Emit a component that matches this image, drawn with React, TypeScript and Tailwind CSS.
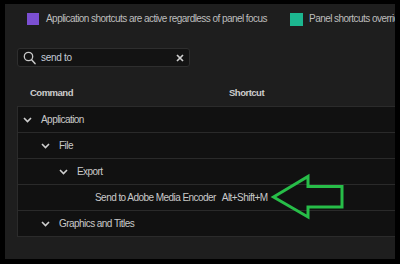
import React from 'react';

const font = { fontFamily: '"Liberation Sans", Arial, sans-serif' };

const Chevron = () => (
    <svg width="9" height="6" viewBox="0 0 9 6" className="shrink-0">
        <path d="M1 1 L4.5 4.5 L8 1" fill="none" stroke="#cfcfcf" strokeWidth="1.6" />
    </svg>
);

interface RowProps {
    level: number;
    label: string;
    open?: boolean;
    shortcut?: string;
}

const rows: RowProps[] = [
    { level: 0, label: 'Application', open: true },
    { level: 1, label: 'File', open: true },
    { level: 2, label: 'Export', open: true },
    { level: 3, label: 'Send to Adobe Media Encoder', shortcut: 'Alt+Shift+M' },
    { level: 1, label: 'Graphics and Titles', open: true },
];

const indents = ['pl-[5px]', 'pl-[23px]', 'pl-[41px]', 'pl-[59px]'];

const Row: React.FC<RowProps & { first: boolean }> = ({ level, label, open, shortcut, first }) => (
    <div
        className={`flex items-center ${first ? 'h-[25px]' : 'h-[26px] border-t border-[#2a2a2a]'} ${indents[level]}`}
    >
        <div className="w-[9px] flex justify-center">{open && <Chevron />}</div>
        <span className="ml-[9px] text-[10px] tracking-[-0.55px] text-[#c9c9c9] whitespace-nowrap">
            {label}
        </span>
        {shortcut && (
            <span className="ml-[6px] text-[10px] tracking-[-0.55px] text-[#c9c9c9] whitespace-nowrap">
                {shortcut}
            </span>
        )}
    </div>
);

export default function App() {
    return (
        <div className="relative w-[400px] h-[264px] bg-black pl-[5px] pt-[4px] pr-[5px] pb-[5px]" style={font}>
            <div className="w-full h-full bg-[#1e1e1e] overflow-hidden flex flex-col">
                {/* legend */}
                <div className="flex items-center h-[12px] mt-[9px] pl-[22px] whitespace-nowrap shrink-0">
                    <div className="w-[12px] h-[12px] bg-[#7b4fd2] shrink-0" />
                    <span className="ml-[7px] text-[10px] leading-[12px] tracking-[-0.55px] text-[#bdbdbd]">
                        Application shortcuts are active regardless of panel focus
                    </span>
                    <div className="ml-[23px] w-[13px] h-[13px] bg-[#1cb68f] shrink-0" />
                    <span className="ml-[6px] text-[10px] leading-[12px] tracking-[-0.55px] text-[#bdbdbd]">
                        Panel shortcuts overrid
                    </span>
                </div>

                {/* search */}
                <div className="ml-[12px] mt-[23px] w-[173px] h-[19px] flex items-center bg-[#131313] border border-[#2e2e2e] rounded-[3px] shrink-0">
                    <svg width="13" height="14" viewBox="0 0 13 14" className="ml-[5px] shrink-0">
                        <circle cx="5.5" cy="5.5" r="4.2" fill="none" stroke="#c8c8c8" strokeWidth="1.3" />
                        <path d="M8.6 8.8 L12 12.6" stroke="#c8c8c8" strokeWidth="1.5" strokeLinecap="round" />
                    </svg>
                    <span className="ml-[5px] text-[10px] tracking-[-0.3px] text-[#c4cbd6]">send to</span>
                    <svg width="8" height="8" viewBox="0 0 8 8" className="ml-auto mr-[5px]">
                        <path d="M1 1 L7 7 M7 1 L1 7" stroke="#cfcfcf" strokeWidth="1.7" />
                    </svg>
                </div>

                {/* header */}
                <div className="mt-[13px] h-[26px] flex items-center pl-[25px] shrink-0">
                    <span className="w-[199px] text-[9.5px] font-bold tracking-[-0.5px] text-[#cdcdcd]">Command</span>
                    <span className="text-[9.5px] font-bold tracking-[-0.5px] text-[#cdcdcd]">Shortcut</span>
                </div>

                {/* table */}
                <div className="ml-[12px] bg-[#111111] border-l border-t border-b border-[#2b2b2b] shrink-0">
                    {rows.map((r, i) => (
                        <Row key={i} {...r} first={i === 0} />
                    ))}
                </div>
            </div>

            {/* annotation arrow */}
            <svg className="absolute left-[268px] top-[172px]" width="80" height="50" viewBox="0 0 80 50">
                <path
                    d="M5.5 25 L40 4.5 L40 14.5 L74 14.5 L74 35 L40 35 L40 45 Z"
                    fill="none"
                    stroke="#27bd48"
                    strokeWidth="3"
                    strokeLinejoin="miter"
                />
            </svg>
        </div>
    );
}
